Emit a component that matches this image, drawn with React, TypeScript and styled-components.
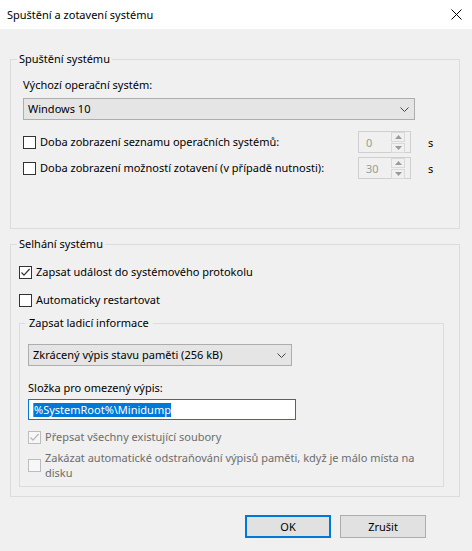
import React from 'react';
import styled, { createGlobalStyle } from 'styled-components';

const GlobalStyle = createGlobalStyle`
  html, body {
    margin: 0;
    padding: 0;
    background: #f0f0f0;
  }
  body {
    font-family: "Noto Sans", "Segoe UI", sans-serif;
    font-size: 11px;
    color: #000;
  }
`;

const CloseIcon = () => (
  <svg width="11" height="11" viewBox="0 0 11 11">
    <path d="M0.5 0.5 L10.5 10.5 M10.5 0.5 L0.5 10.5" stroke="#000" strokeWidth="1" fill="none" />
  </svg>
);

const Chevron = () => (
  <svg width="9" height="5" viewBox="0 0 9 5">
    <path d="M0.5 0.5 L4.5 4.5 L8.5 0.5" stroke="#444" strokeWidth="1" fill="none" />
  </svg>
);

const Tick = ({ color }: { color: string }) => (
  <svg width="11" height="11" viewBox="0 0 11 11">
    <path d="M1.5 5.5 L4 8.2 L9.6 2" stroke={color} strokeWidth="1.2" fill="none" />
  </svg>
);

const Triangle = ({ down }: { down?: boolean }) => (
  <svg width="7" height="4" viewBox="0 0 7 4">
    <path d={down ? 'M0 0 L7 0 L3.5 4 Z' : 'M0 4 L7 4 L3.5 0 Z'} fill="#9a9a9a" />
  </svg>
);

const Check = ({ checked, disabled }: { checked?: boolean; disabled?: boolean }) => (
  <Box $disabled={disabled}>{checked && <Tick color={disabled ? '#b5b5b5' : '#333'} />}</Box>
);

const Spin = ({ value }: { value: string }) => (
  <SpinBox>
    <SpinValue>{value}</SpinValue>
    <SpinButtons>
      <SpinButton>
        <Triangle />
      </SpinButton>
      <SpinButton>
        <Triangle down />
      </SpinButton>
    </SpinButtons>
  </SpinBox>
);

const App = () => {
  return (
    <>
      <GlobalStyle />
      <Window>
        <TitleBar>
          <Title>Spuštění a zotavení systému</Title>
          <CloseIcon />
        </TitleBar>

        <Content>
          <Group>
            <Legend $ml={6} $pad={2}>Spuštění systému</Legend>
            <GroupBody $pad="10px 27px 49px 12px">
              <Label>Výchozí operační systém:</Label>
              <Combo $width={392} $mt={5}>
                <span>Windows 10</span>
                <Chevron />
              </Combo>
              <SpinRow $mt={11}>
                <Check />
                <RowText>Doba zobrazení seznamu operačních systémů:</RowText>
                <Spin value="0" />
                <Unit>s</Unit>
              </SpinRow>
              <SpinRow $mt={4}>
                <Check />
                <RowText>Doba zobrazení možností zotavení (v případě nutnosti):</RowText>
                <Spin value="30" />
                <Unit>s</Unit>
              </SpinRow>
            </GroupBody>
          </Group>

          <Group $mt={7}>
            <Legend $ml={6} $pad={2}>Selhání systému</Legend>
            <GroupBody $pad="12px 15px 9px 8px">
              <CheckRow>
                <Check checked />
                <RowText>Zapsat událost do systémového protokolu</RowText>
              </CheckRow>
              <CheckRow $mt={12}>
                <Check />
                <RowText>Automaticky restartovat</RowText>
              </CheckRow>

              <Group $mt={7}>
                <Legend $ml={5} $pad={4}>Zapsat ladicí informace</Legend>
                <GroupBody $pad="13px 8px 6px 8px">
                  <Combo $width={264}>
                    <span>Zkrácený výpis stavu paměti (256 kB)</span>
                    <Chevron />
                  </Combo>
                  <Label $mt={14}>Složka pro omezený výpis:</Label>
                  <TextField>
                    <Selected>%SystemRoot%\Minidump</Selected>
                  </TextField>
                  <CheckRow $mt={9} $disabled>
                    <Check checked disabled />
                    <RowText>Přepsat všechny existující soubory</RowText>
                  </CheckRow>
                  <CheckRow $mt={5} $disabled>
                    <Check disabled />
                    <RowText $lh={15}>
                      Zakázat automatické odstraňování výpisů paměti, když je málo místa na
                      <br />
                      disku
                    </RowText>
                  </CheckRow>
                </GroupBody>
              </Group>
            </GroupBody>
          </Group>
        </Content>

        <Footer>
          <Button $primary>OK</Button>
          <Button>Zrušit</Button>
        </Footer>
      </Window>
    </>
  );
};

export default App;

const Window = styled.div`
  width: 472px;
  height: 551px;
  background: #f0f0f0;
  display: flex;
  flex-direction: column;
  box-sizing: border-box;
  overflow: hidden;
`;

const TitleBar = styled.div`
  height: 29px;
  background: #fff;
  display: flex;
  align-items: center;
  justify-content: space-between;
  padding: 0 10px 0 7px;
  box-sizing: border-box;
  flex-shrink: 0;
`;

const Title = styled.div`
  line-height: 16px;
  color: #000;
`;

const Content = styled.div`
  padding: 22px 12px 0 10px;
`;

const Group = styled.fieldset<{ $mt?: number }>`
  margin: ${(p) => p.$mt ?? 0}px 0 0 0;
  padding: 0;
  min-width: 0;
  border: 1px solid #dcdcdc;
`;

const Legend = styled.legend<{ $ml: number; $pad: number }>`
  margin-left: ${(p) => p.$ml}px;
  padding: 0 ${(p) => p.$pad}px;
  line-height: 16px;
`;

const GroupBody = styled.div<{ $pad: string }>`
  padding: ${(p) => p.$pad};
  display: flex;
  flex-direction: column;
`;

const Label = styled.div<{ $mt?: number }>`
  margin-top: ${(p) => p.$mt ?? 0}px;
  line-height: 16px;
`;

const Combo = styled.div<{ $width: number; $mt?: number }>`
  width: ${(p) => p.$width}px;
  height: 22px;
  margin-top: ${(p) => p.$mt ?? 0}px;
  box-sizing: border-box;
  background: #e5e5e5;
  border: 1px solid #adadad;
  display: flex;
  align-items: center;
  justify-content: space-between;
  padding: 0 5px 0 4px;
  line-height: 16px;
`;

const CheckRow = styled.div<{ $mt?: number; $disabled?: boolean }>`
  display: flex;
  align-items: center;
  gap: 4px;
  margin-top: ${(p) => p.$mt ?? 0}px;
  color: ${(p) => (p.$disabled ? '#6d6d6d' : '#000')};
`;

const SpinRow = styled(CheckRow)`
  height: 22px;
`;

const RowText = styled.div<{ $lh?: number }>`
  flex: 1;
  line-height: ${(p) => p.$lh ?? 16}px;
  white-space: nowrap;
`;

const Box = styled.div<{ $disabled?: boolean }>`
  width: 13px;
  height: 13px;
  box-sizing: border-box;
  flex-shrink: 0;
  border: 1px solid ${(p) => (p.$disabled ? '#bcbcbc' : '#333')};
  background: ${(p) => (p.$disabled ? '#f7f7f7' : '#fff')};
  display: flex;
  align-items: center;
  justify-content: center;
`;

const SpinBox = styled.div`
  width: 53px;
  height: 22px;
  box-sizing: border-box;
  border: 1px solid #cfcfcf;
  background: #f0f0f0;
  display: flex;
  align-items: center;
  justify-content: space-between;
  padding: 0 5px 0 7px;
`;

const SpinValue = styled.span`
  color: #a09a92;
`;

const SpinButtons = styled.div`
  display: flex;
  flex-direction: column;
  gap: 1px;
`;

const SpinButton = styled.div`
  width: 12px;
  height: 8px;
  border: 1px solid #d9d9d9;
  background: #f0f0f0;
  display: flex;
  align-items: center;
  justify-content: center;
`;

const Unit = styled.span`
  width: 17px;
  padding-left: 13px;
  box-sizing: border-box;
`;

const TextField = styled.div`
  width: 268px;
  height: 21px;
  margin-top: 3px;
  box-sizing: border-box;
  border: 1px solid #0078d7;
  background: #fff;
  display: flex;
  align-items: center;
  padding: 0 4px;
`;

const Selected = styled.span`
  background: #0078d7;
  color: #fff;
  line-height: 14px;
  border-left: 1px solid #e07b2a;
`;

const Footer = styled.div`
  display: flex;
  justify-content: flex-end;
  gap: 9px;
  padding: 18px 46px 0 0;
`;

const Button = styled.button<{ $primary?: boolean }>`
  width: 86px;
  height: 23px;
  margin: 0;
  padding: 0;
  box-sizing: border-box;
  background: #e1e1e1;
  border: ${(p) => (p.$primary ? '2px solid #0078d7' : '1px solid #adadad')};
  font-family: "Noto Sans", "Segoe UI", sans-serif;
  font-size: 11px;
  color: #000;
`;
